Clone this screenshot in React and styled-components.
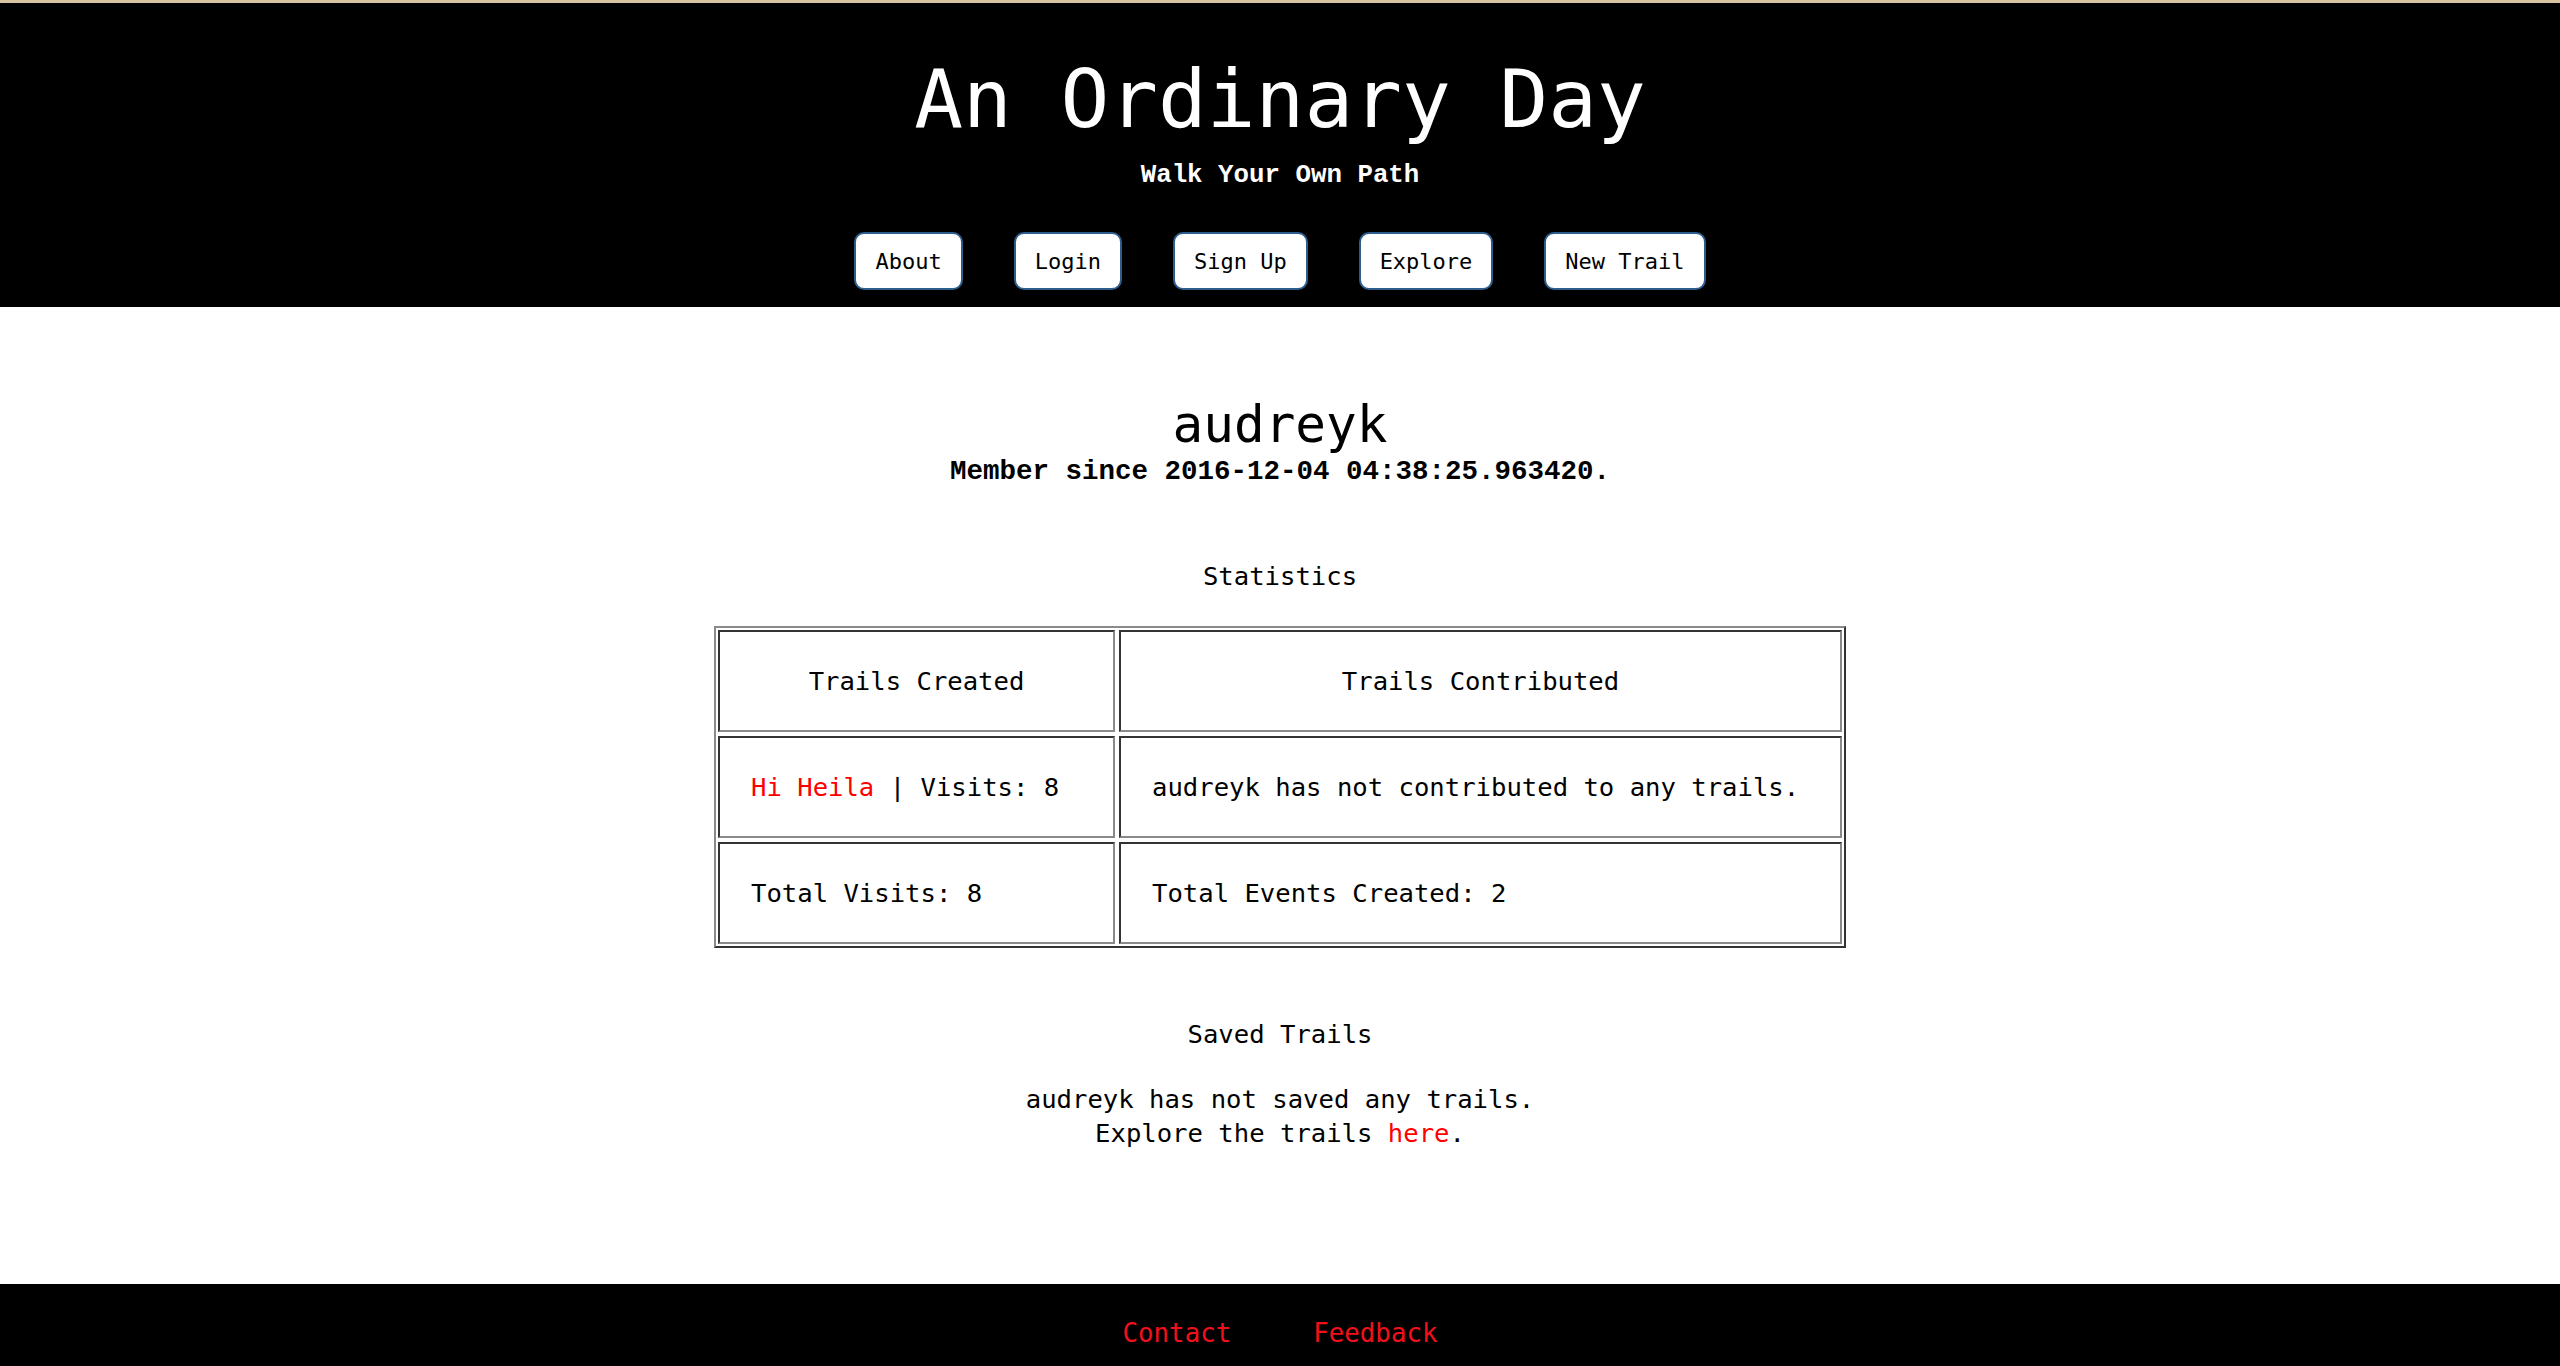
import React from 'react';
import styled, { createGlobalStyle } from 'styled-components';

const GlobalStyle = createGlobalStyle`
  html, body {
    margin: 0;
    padding: 0;
    background: #fff;
  }
  body {
    font-family: "DejaVu Sans Mono", "Liberation Mono", monospace;
    color: #000;
  }
`;

const Page = styled.div`
  display: flex;
  flex-direction: column;
  min-height: 100vh;
`;

const Header = styled.header`
  background: #000;
  border-top: 3px solid #d8c3a0;
  padding: 48px 0 17px;
  text-align: center;
`;

const Title = styled.h1`
  color: #fff;
  font-size: 81px;
  font-weight: normal;
  line-height: 96px;
  margin: 0;
`;

const Tagline = styled.p`
  color: #fff;
  font-family: "Liberation Mono", monospace;
  font-size: 25.8px;
  font-weight: bold;
  line-height: 30px;
  margin: 14px 0 0;
`;

const Nav = styled.nav`
  display: flex;
  gap: 51px;
  justify-content: center;
  margin-top: 41px;
`;

const NavButton = styled.a`
  background: #fff;
  border: 2px solid #2d5d8c;
  border-radius: 10px;
  color: #000;
  display: block;
  font-size: 22px;
  line-height: 26px;
  padding: 15px 19px 13px;
  text-decoration: none;
`;

const Main = styled.main`
  flex: 1;
  padding-top: 88px;
  text-align: center;
`;

const Username = styled.h2`
  font-size: 51px;
  font-weight: normal;
  line-height: 60px;
  margin: 0;
`;

const Since = styled.p`
  font-family: "Liberation Mono", monospace;
  font-size: 27.5px;
  font-weight: bold;
  line-height: 32px;
  margin: 1px 0 0;
`;

const SectionTitle = styled.h3`
  font-size: 25.6px;
  font-weight: normal;
  line-height: 34px;
  margin: ${(p) => p.$top}px 0 ${(p) => p.$bottom}px;
`;

const StatsTable = styled.div`
  border: 2px solid;
  border-color: #8a8a8a #333 #333 #8a8a8a;
  display: grid;
  gap: 4px;
  grid-template-columns: 397px 723px;
  grid-auto-rows: 102px;
  margin: 0 auto;
  padding: 2px;
  width: max-content;
`;

const Cell = styled.div`
  align-items: center;
  border: 2px solid;
  border-color: #333 #8a8a8a #8a8a8a #333;
  display: flex;
  font-size: 25.6px;
  justify-content: ${(p) => (p.$head ? 'center' : 'flex-start')};
  line-height: 34px;
  padding: 0 31px;
  white-space: nowrap;
`;

const RedLink = styled.a`
  color: #ff0000;
  text-decoration: none;
`;

const Note = styled.p`
  font-size: 25.6px;
  line-height: 34px;
  margin: 0;
`;

const Footer = styled.footer`
  background: #000;
  display: flex;
  gap: 82px;
  justify-content: center;
  padding: 32px 0 16px;
`;

const FooterLink = styled.a`
  color: #f2101b;
  font-size: 25.8px;
  line-height: 34px;
  text-decoration: none;
`;

const navItems = ['About', 'Login', 'Sign Up', 'Explore', 'New Trail'];

export default function App() {
  return (
    <Page>
      <GlobalStyle />
      <Header>
        <Title>An Ordinary Day</Title>
        <Tagline>Walk Your Own Path</Tagline>
        <Nav>
          {navItems.map((item) => (
            <NavButton key={item} href="#">
              {item}
            </NavButton>
          ))}
        </Nav>
      </Header>

      <Main>
        <Username>audreyk</Username>
        <Since>Member since 2016-12-04 04:38:25.963420.</Since>

        <SectionTitle $top={71} $bottom={33}>
          Statistics
        </SectionTitle>
        <StatsTable>
          <Cell $head>Trails Created</Cell>
          <Cell $head>Trails Contributed</Cell>
          <Cell>
            <RedLink href="#">Hi Heila</RedLink>&nbsp;| Visits: 8
          </Cell>
          <Cell>audreyk has not contributed to any trails.</Cell>
          <Cell>Total Visits: 8</Cell>
          <Cell>Total Events Created: 2</Cell>
        </StatsTable>

        <SectionTitle $top={69} $bottom={31}>
          Saved Trails
        </SectionTitle>
        <Note>audreyk has not saved any trails.</Note>
        <Note>
          Explore the trails <RedLink href="#">here</RedLink>.
        </Note>
      </Main>

      <Footer>
        <FooterLink href="#">Contact</FooterLink>
        <FooterLink href="#">Feedback</FooterLink>
      </Footer>
    </Page>
  );
}
